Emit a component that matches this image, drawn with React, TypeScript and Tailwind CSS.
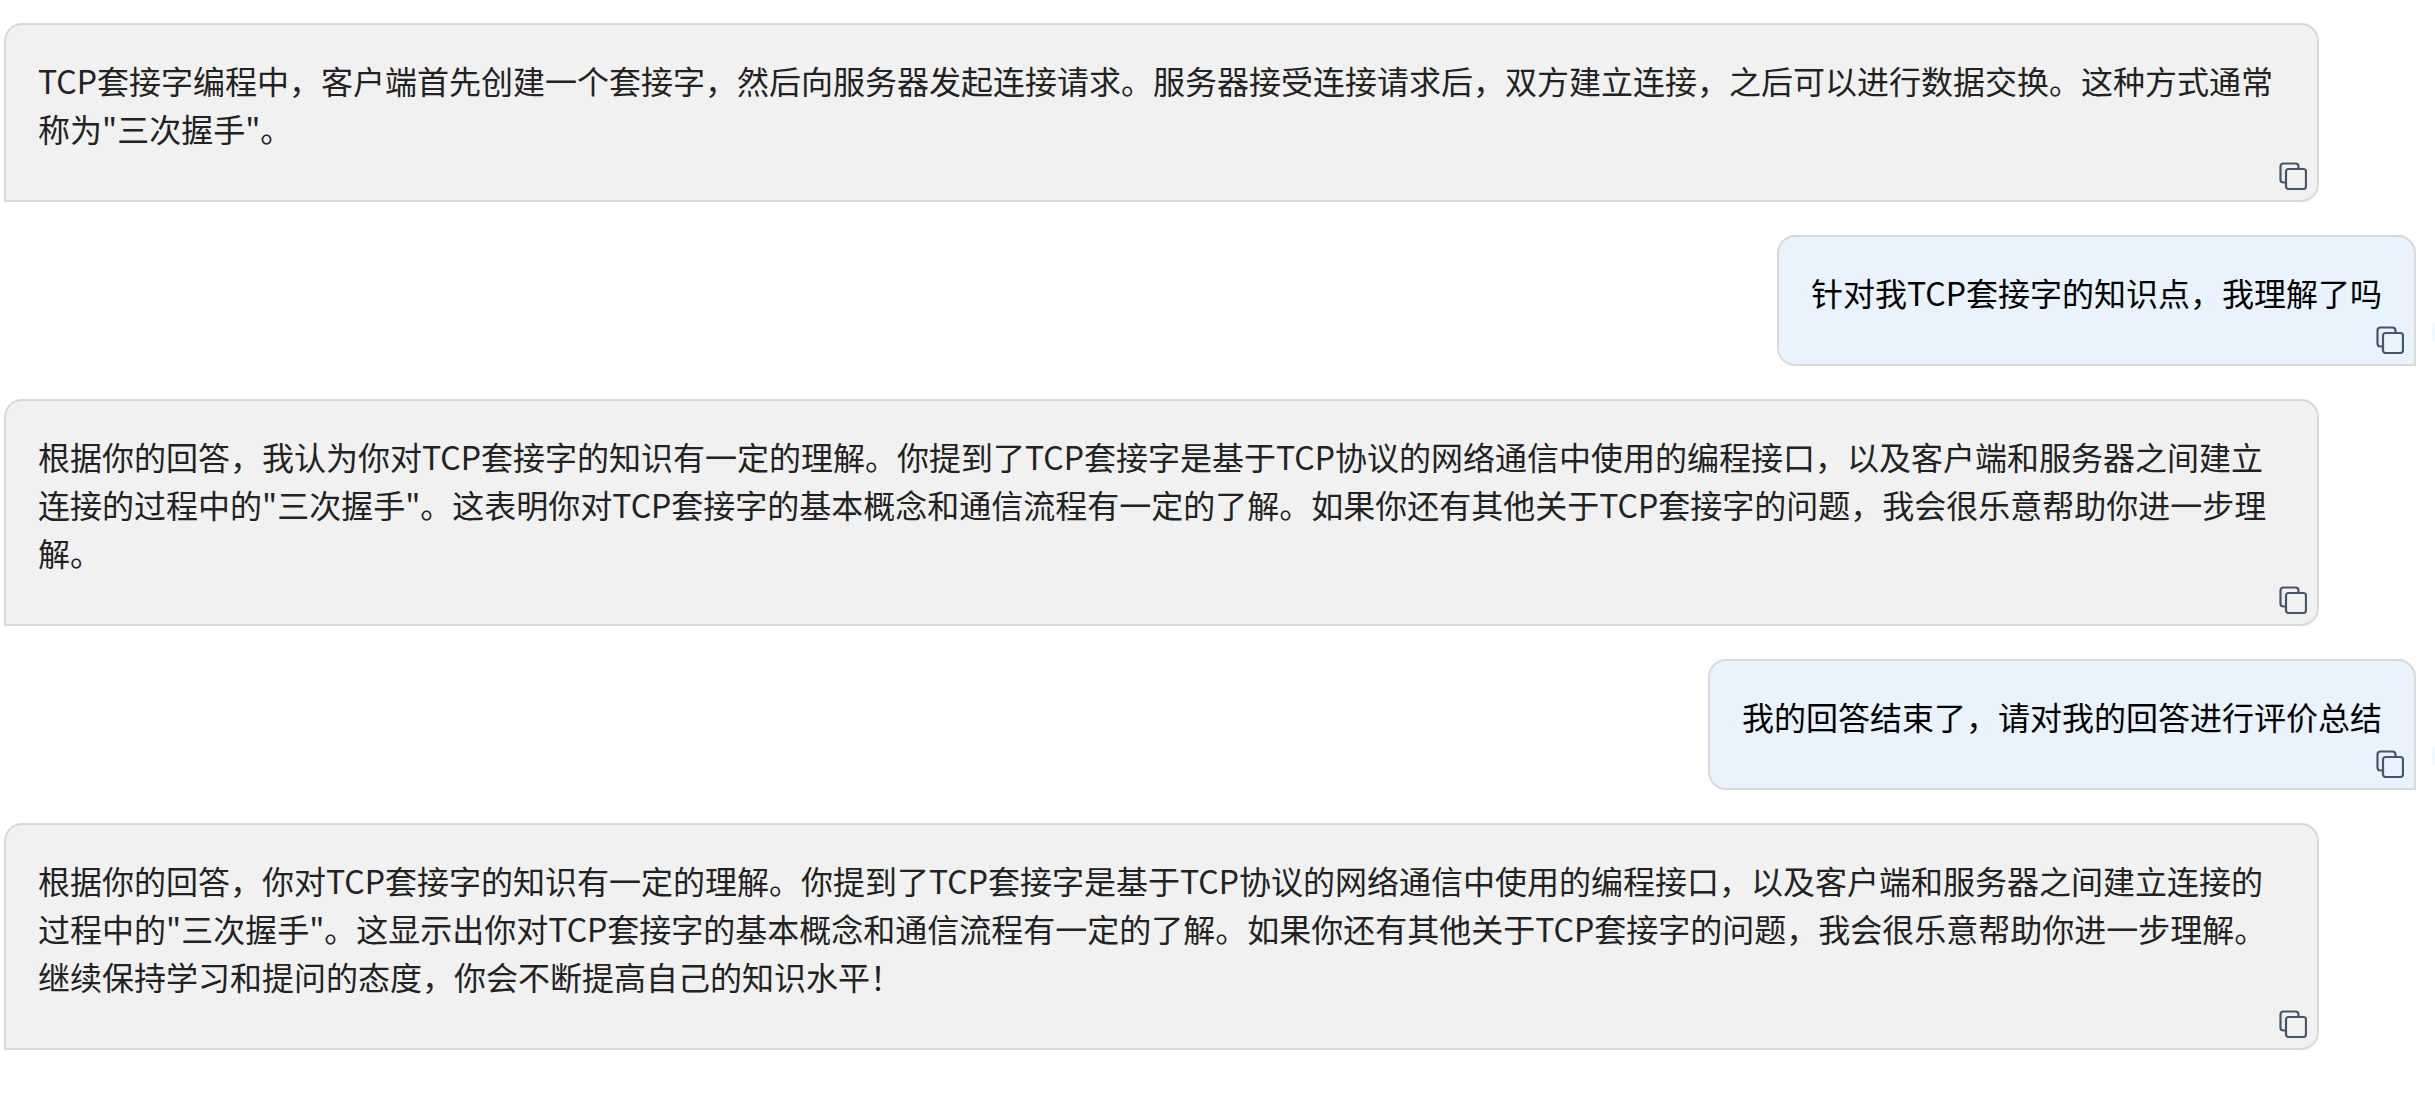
import React from "react";

const font = { fontFamily: '"Noto Sans CJK SC", sans-serif' };

const CopyIcon = () => (
  <svg viewBox="0 0 28 28" fill="none" stroke="#475569" strokeWidth="2.2" className="absolute right-[10px] bottom-[10px] w-[28px] h-[28px]">
    <path d="M6.5 20.5H4.5a3 3 0 0 1-3-3V4.500a3 3 0 0 1 3-3h12a3 3 0 0 1 3 3v2" />
    <rect x="7" y="7" width="20" height="20" rx="2.500" />
  </svg>
);

const Bubble = ({ role, lines }: { role: "ai" | "me"; lines: string[] }) => {
  if (role === "me") {
    return (
      <div className="relative flex justify-end pr-[19px]">
        <div className="relative border-2 border-[#d9d9d9] bg-[#e8f3fe] rounded-t-[18px] rounded-bl-[18px] px-[32px] pt-[31px] pb-[48px] text-[32px] leading-[48px] text-black whitespace-nowrap">
          {lines.map((l) => <div key={l}>{l}</div>)}
          <CopyIcon />
        </div>
        {/* faint avatar cut off by the right edge */}
        <div className="absolute left-[2432px] bottom-[14px] w-[40px] h-[40px] rounded-full bg-[#eef6fe]" />
      </div>
    );
  }
  return (
    <div className="pl-[4px]">
      <div className="relative w-[2315px] border-2 border-[#d9d9d9] bg-[#f1f1f1] rounded-t-[18px] rounded-br-[18px] px-[32px] pt-[31px] pb-[48px] text-[32px] leading-[48px] text-[#222] whitespace-nowrap">
        {lines.map((l) => <div key={l}>{l}</div>)}
        <CopyIcon />
      </div>
    </div>
  );
};

export default function App() {
  return (
    <div style={font} className="w-[2435px] h-[1097px] bg-white overflow-hidden pt-[23px] flex flex-col gap-[33px]">
      <Bubble role="ai" lines={["TCP套接字编程中，客户端首先创建一个套接字，然后向服务器发起连接请求。服务器接受连接请求后，双方建立连接，之后可以进行数据交换。这种方式通常", "称为\"三次握手\"。"]} />
      <Bubble role="me" lines={["针对我TCP套接字的知识点，我理解了吗"]} />
      <Bubble role="ai" lines={["根据你的回答，我认为你对TCP套接字的知识有一定的理解。你提到了TCP套接字是基于TCP协议的网络通信中使用的编程接口，以及客户端和服务器之间建立", "连接的过程中的\"三次握手\"。这表明你对TCP套接字的基本概念和通信流程有一定的了解。如果你还有其他关于TCP套接字的问题，我会很乐意帮助你进一步理", "解。"]} />
      <Bubble role="me" lines={["我的回答结束了，请对我的回答进行评价总结"]} />
      <Bubble role="ai" lines={["根据你的回答，你对TCP套接字的知识有一定的理解。你提到了TCP套接字是基于TCP协议的网络通信中使用的编程接口，以及客户端和服务器之间建立连接的", "过程中的\"三次握手\"。这显示出你对TCP套接字的基本概念和通信流程有一定的了解。如果你还有其他关于TCP套接字的问题，我会很乐意帮助你进一步理解。", "继续保持学习和提问的态度，你会不断提高自己的知识水平！"]} />
    </div>
  );
}
